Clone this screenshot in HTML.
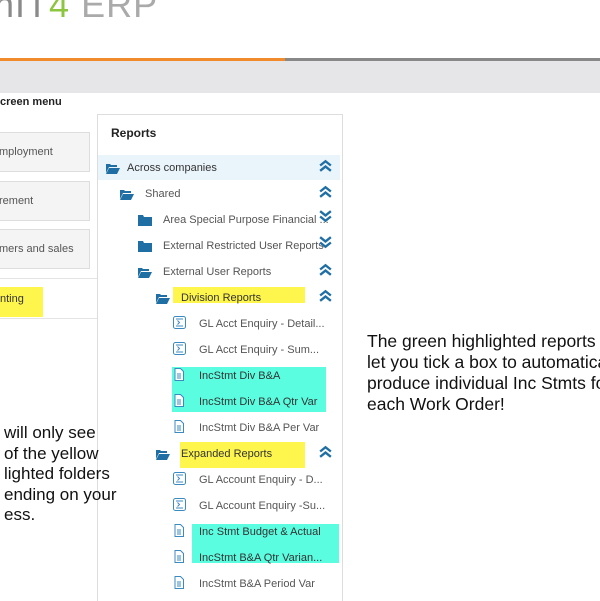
<!DOCTYPE html><html><head><style>
body{margin:0;width:600px;height:600px;overflow:hidden;background:#fff;font-family:"Liberation Sans",sans-serif;position:relative}
.a{position:absolute}
.t{font-size:11px;color:#555;white-space:nowrap}
.tile{position:absolute;left:-2px;width:90px;height:38px;background:#f4f4f4;border:1px solid #ddd;font-size:11px;color:#555;line-height:38px}
svg.i{position:absolute}
</style></head><body>
<svg width="0" height="0" style="position:absolute">
<defs>
<symbol id="fo" viewBox="0 0 14 11"><path d="M0 1h4l1 1h6v2H3L0 10z" fill="#1f6fa5"/><path d="M3 5h11l-3 6H0z" fill="#1f6fa5"/></symbol>
<symbol id="fc" viewBox="0 0 14 11"><path d="M0 0h5l1 2h8v9H0z" fill="#1f6fa5"/></symbol>
<symbol id="doc" viewBox="0 0 10 13"><path d="M1 .5h5.5l3 3v9h-8.5z" fill="#fff" stroke="#3b8ac0"/><path d="M3 6h4M3 8h4M3 10h4" stroke="#3b8ac0"/></symbol>
<symbol id="enq" viewBox="0 0 13 13"><rect x=".5" y=".5" width="12" height="12" rx="2" fill="#fff" stroke="#3b8ac0"/><path d="M3 3h7M3 10h7M4.5 4.5l2 2-2 2" fill="none" stroke="#3b8ac0"/></symbol>
<symbol id="up" viewBox="0 0 14 12"><path d="M2 6l5-4 5 4M2 11l5-4 5 4" fill="none" stroke="#1f6fa5" stroke-width="2.2"/></symbol>
<symbol id="dn" viewBox="0 0 14 12"><path d="M2 1l5 4 5-4M2 6l5 4 5-4" fill="none" stroke="#1f6fa5" stroke-width="2.2"/></symbol>
</defs></svg>
<div class="a" style="left:-6px;top:-16px;font-size:36px;color:#8a8a8a;letter-spacing:1px">nIT<span style="color:#8cc63f">4</span> <span style="color:#aaa">ERP</span></div>
<div class="a" style="left:0;top:58px;width:285px;height:3px;background:#f08a2a"></div>
<div class="a" style="left:285px;top:58px;width:315px;height:3px;background:#888"></div>
<div class="a" style="left:0;top:61px;width:600px;height:32px;background:#e6e6e8"></div>
<div class="a" style="left:0;top:96px;font-size:11px;font-weight:bold;color:#222">creen menu</div>
<div class="a" style="left:0;top:114px;width:97px;height:164px;border-right:1px solid #e4e4e4;border-bottom:1px solid #e4e4e4"></div>
<div class="tile" style="top:132px">mployment</div>
<div class="tile" style="top:181px">rement</div>
<div class="tile" style="top:229px">mers and sales</div>
<div class="a" style="left:0;top:287px;width:43px;height:30px;background:#fff64d;font-size:11px;color:#333;line-height:24px">nting</div>
<div class="a" style="left:0;top:318px;width:97px;border-top:1px solid #e4e4e4"></div>
<div class="a" style="left:97px;top:114px;width:244px;height:486px;border-left:1px solid #ddd;border-top:1px solid #ddd;border-right:1px solid #ddd"></div>
<div class="a" style="left:111px;top:126px;font-size:12px;font-weight:bold;color:#222">Reports</div>
<div class="a" style="left:98px;top:155px;width:242px;height:25px;background:#eaf4fb"></div>
<div class="a" style="left:172px;top:367px;width:154px;height:45px;background:#5bfde0"></div>
<div class="a" style="left:192px;top:524px;width:147px;height:39px;background:#5bfde0"></div>
<div class="a" style="left:173px;top:287px;width:132px;height:16px;background:#fff64d"></div>
<div class="a" style="left:180px;top:442px;width:125px;height:26px;background:#fff64d"></div>
<svg class="i" style="left:106px;top:163px" width="14" height="11"><use href="#fo"/></svg><div class="a t" style="left:127px;top:162px;color:#333">Across companies</div>
<svg class="i" style="left:120px;top:189px" width="14" height="11"><use href="#fo"/></svg><div class="a t" style="left:145px;top:188px">Shared</div>
<svg class="i" style="left:138px;top:215px" width="14" height="11"><use href="#fc"/></svg><div class="a t" style="left:163px;top:214px">Area Special Purpose Financial ...</div>
<svg class="i" style="left:138px;top:241px" width="14" height="11"><use href="#fc"/></svg><div class="a t" style="left:163px;top:240px">External Restricted User Reports</div>
<svg class="i" style="left:138px;top:267px" width="14" height="11"><use href="#fo"/></svg><div class="a t" style="left:163px;top:266px">External User Reports</div>
<svg class="i" style="left:156px;top:293px" width="14" height="11"><use href="#fo"/></svg><div class="a t" style="left:181px;top:292px;color:#333">Division Reports</div>
<svg class="i" style="left:173px;top:316px" width="13" height="13"><use href="#enq"/></svg><div class="a t" style="left:199px;top:318px">GL Acct Enquiry - Detail...</div>
<svg class="i" style="left:173px;top:342px" width="13" height="13"><use href="#enq"/></svg><div class="a t" style="left:199px;top:344px">GL Acct Enquiry - Sum...</div>
<svg class="i" style="left:174px;top:368px" width="10" height="13"><use href="#doc"/></svg><div class="a t" style="left:199px;top:370px;color:#333">IncStmt Div B&amp;A</div>
<svg class="i" style="left:174px;top:394px" width="10" height="13"><use href="#doc"/></svg><div class="a t" style="left:199px;top:396px;color:#333">IncStmt Div B&amp;A Qtr Var</div>
<svg class="i" style="left:174px;top:420px" width="10" height="13"><use href="#doc"/></svg><div class="a t" style="left:199px;top:422px">IncStmt Div B&amp;A Per Var</div>
<svg class="i" style="left:156px;top:449px" width="14" height="11"><use href="#fo"/></svg><div class="a t" style="left:181px;top:448px;color:#333">Expanded Reports</div>
<svg class="i" style="left:173px;top:472px" width="13" height="13"><use href="#enq"/></svg><div class="a t" style="left:199px;top:474px">GL Account Enquiry - D...</div>
<svg class="i" style="left:173px;top:498px" width="13" height="13"><use href="#enq"/></svg><div class="a t" style="left:199px;top:500px">GL Account Enquiry -Su...</div>
<svg class="i" style="left:174px;top:524px" width="10" height="13"><use href="#doc"/></svg><div class="a t" style="left:199px;top:526px;color:#333">Inc Stmt Budget &amp; Actual</div>
<svg class="i" style="left:174px;top:550px" width="10" height="13"><use href="#doc"/></svg><div class="a t" style="left:199px;top:552px;color:#333">IncStmt B&amp;A Qtr Varian...</div>
<svg class="i" style="left:174px;top:576px" width="10" height="13"><use href="#doc"/></svg><div class="a t" style="left:199px;top:578px">IncStmt B&amp;A Period Var</div>
<svg class="i" style="left:318px;top:159px" width="15" height="13"><use href="#up"/></svg>
<svg class="i" style="left:318px;top:185px" width="15" height="13"><use href="#up"/></svg>
<svg class="i" style="left:318px;top:210px" width="15" height="13"><use href="#dn"/></svg>
<svg class="i" style="left:318px;top:236px" width="15" height="13"><use href="#dn"/></svg>
<svg class="i" style="left:318px;top:263px" width="15" height="13"><use href="#up"/></svg>
<svg class="i" style="left:318px;top:289px" width="15" height="13"><use href="#up"/></svg>
<svg class="i" style="left:318px;top:445px" width="15" height="13"><use href="#up"/></svg>
<div class="a" style="left:367px;top:331px;font-size:17.5px;line-height:21px;color:#111;white-space:nowrap">The green highlighted reports<br>let you tick a box to automatica<br>produce individual Inc Stmts fo<br>each Work Order!</div>
<div class="a" style="left:4px;top:423px;font-size:17px;line-height:20.5px;color:#111;white-space:nowrap">will only see<br>of the yellow<br>lighted folders<br>ending on your<br>ess.</div>
</body></html>
